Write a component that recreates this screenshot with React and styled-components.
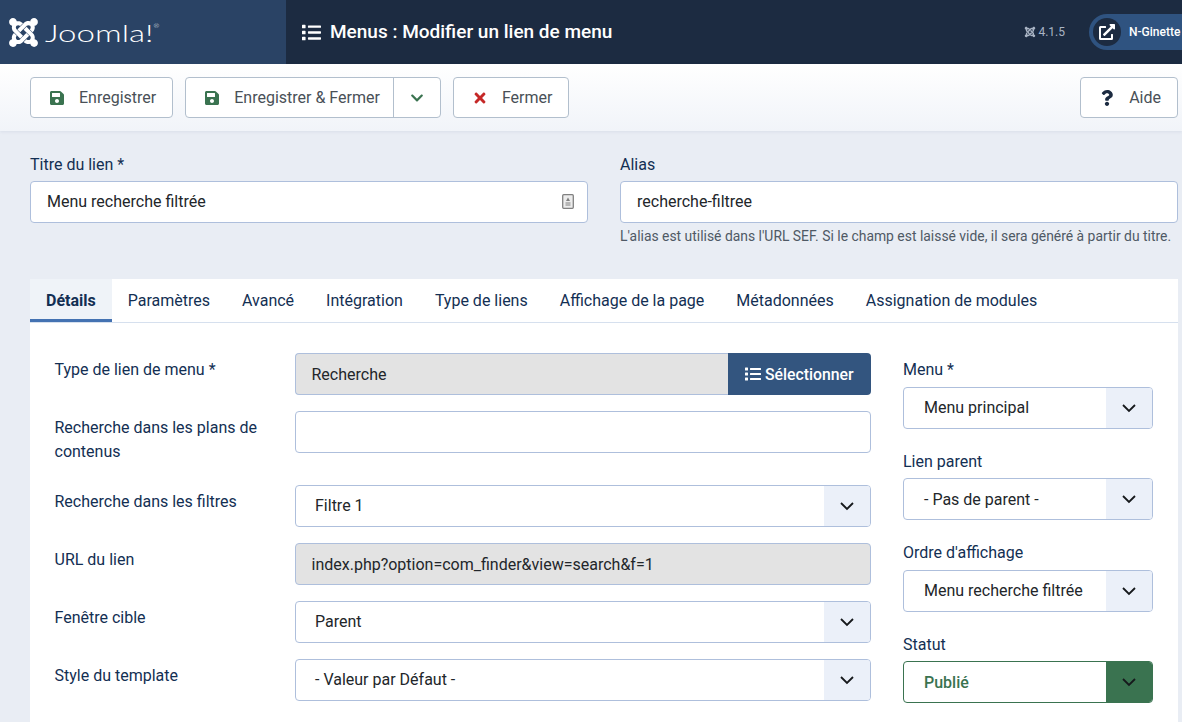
import React from 'react';
import styled, { createGlobalStyle } from 'styled-components';
import { FaJoomla, FaSave, FaTimes, FaChevronDown, FaQuestion, FaList, FaExternalLinkAlt } from 'react-icons/fa';

const Global = createGlobalStyle`
html, body {
  margin: 0;
  height: 722px;
  overflow: hidden;
  background: #e9edf4;
  font-family: Roboto, "Liberation Sans", sans-serif;
}
* { box-sizing: border-box; }`

const Header = styled.header`
display: flex;
height: 64px;
background: #1c2b41;
color: white;`

const Brand = styled.div`
display: flex;
align-items: center;
gap: 5px;
width: 286px;
padding-left: 7px;
background: #2a4365;
svg { font-size: 33px; flex: none; }`

const Wordmark = styled.span`
font-family: Lato, sans-serif;
font-weight: 300;
font-size: 24px;
transform: scaleX(1.38);
transform-origin: left center;
sup { font-size: 5px; vertical-align: 14px; }`

const PageTitle = styled.h1`
display: flex;
align-items: center;
gap: 9px;
flex: 1;
margin: 0 0 2px 16px;
font-size: 19px;
font-weight: 500;
svg { font-size: 19px; margin-top: 2px; }`

const Version = styled.span`
display: flex;
align-items: center;
gap: 2px;
margin-right: 24px;
font-size: 12px;
color: #a9b4c4;
svg { font-size: 12px; }`

const UserPill = styled.div`
display: flex;
align-items: center;
gap: 8px;
align-self: center;
width: 93px;
height: 36px;
padding-left: 4px;
border-radius: 18px 0 0 18px;
background: #2f5380;
font-size: 12px;
font-weight: 500;
white-space: nowrap;`

const PillIcon = styled.span`
display: flex;
align-items: center;
justify-content: center;
width: 28px;
height: 28px;
flex: none;
border-radius: 50%;
background: #1c2b41;
svg { font-size: 16px; }`

const Toolbar = styled.div`
display: flex;
align-items: center;
gap: 12px;
height: 67px;
padding: 0 4px 0 30px;
background: linear-gradient(#ffffff, #f1f4f9);
box-shadow: 0 1px 3px rgba(40, 70, 110, 0.08);`

const ToolGroup = styled.div`
display: flex;
height: 41px;
margin-left: ${p => (p.$end ? 'auto' : '0')};
border: 1px solid #b2bfcd;
border-radius: 4px;
background: white;`

const ToolButton = styled.div`
display: flex;
align-items: center;
gap: 14px;
padding: 0 ${p => (p.$split ? '13px' : '16px')} 0 18px;
font-size: 16px;
color: #495057;
svg { font-size: 16px; color: ${p => p.$icon}; }`

const ToolCaret = styled.div`
display: flex;
align-items: center;
justify-content: center;
width: 47px;
border-left: 1px solid #b2bfcd;
svg { font-size: 14px; color: #3a7350; }`

const TitleRow = styled.div`
display: grid;
grid-template-columns: 558px 558px;
gap: 32px;
padding: 22px 4px 0 30px;`

const Label = styled.label`
display: block;
font-size: 16px;
line-height: 24px;
color: #132f53;`

const TitleInput = styled.div`
display: flex;
align-items: center;
justify-content: space-between;
height: 42px;
margin-top: 4px;
padding: 0 13px 2px 16px;
border: 1px solid #aebfdc;
border-radius: 4px;
background: white;
font-size: 16px;
color: #22262a;`

const Help = styled.div`
margin-top: 3px;
font-size: 13.9px;
line-height: 21px;
color: #4f5965;
white-space: nowrap;`

const Panel = styled.section`
margin: 32px 4px 0 30px;
height: 443px;
background: white;`

const Tabs = styled.nav`
display: flex;
height: 44px;
border-bottom: 1px solid #d6e0ee;`

const Tab = styled.div`
display: flex;
align-items: center;
padding: 0 16px;
height: 43px;
font-size: 16px;
font-weight: ${p => (p.$active ? 700 : 400)};
color: #132f53;
background: ${p => (p.$active ? '#eff3f8' : 'transparent')};
border-bottom: ${p => (p.$active ? '3px solid #4472b2' : '0')};
padding-top: ${p => (p.$active ? '3px' : '0')};`

const Body = styled.div`
display: grid;
grid-template-columns: 816.5px 250px;
column-gap: 32px;
padding: 30px 0 0 24.5px;`

const Row = styled.div`
display: grid;
grid-template-columns: 240.5px 576px;
margin-bottom: 16px;`

const RowLabel = styled(Label)`
padding: 5px 16px 5px 0;`

const Field = styled.div`
display: flex;
align-items: center;
height: 42px;
padding-left: 15.5px;
border: 1px solid #aebfdc;
border-radius: 4px;
background: ${p => (p.$disabled ? '#e3e3e3' : 'white')};
font-size: 16px;
color: #22262a;`

const PickerWrap = styled.div`
display: flex;
height: 42px;`

const PickerValue = styled(Field)`
flex: 1;
border-radius: 4px 0 0 4px;
border-right: 0;`

const PickerButton = styled.div`
display: flex;
align-items: center;
gap: 4px;
width: 143px;
padding-left: 17px;
border-radius: 0 4px 4px 0;
background: #33557f;
color: white;
font-size: 15.8px;
font-weight: 500;
svg { font-size: 16px; }`

const SelectBox = styled.div`
display: flex;
align-items: stretch;
height: 42px;
border: 1px solid ${p => (p.$ok ? '#3a7350' : '#aebfdc')};
border-radius: 4px;
overflow: hidden;
background: white;
font-size: 16px;
color: ${p => (p.$ok ? '#3a7350' : '#22262a')};
font-weight: ${p => (p.$ok ? 500 : 400)};`

const SelectText = styled.div`
display: flex;
align-items: center;
flex: 1;
padding: 0 0 ${p => (p.$wide ? '0' : '1px')} ${p => (p.$wide ? '20px' : '19px')};
white-space: nowrap;`

const SelectCaret = styled.div`
display: flex;
align-items: center;
justify-content: center;
width: 46px;
background: ${p => (p.$ok ? '#3a7350' : '#ebf0f9')};`

const Side = styled.aside`
padding-top: 5.2px;`

const SideGroup = styled.div`
margin-bottom: 20.9px;
${Label} { margin-bottom: 4.6px; }`

const Caret = () => (
  <svg width="16" height="16" viewBox="0 0 16 16" fill="none" stroke="#16191c" strokeWidth="1.8">
    <path d="M2 5l6 6 6-6" />
  </svg>
)

const Select = ({ value, ok, wide }) => (
  <SelectBox $ok={ok}>
    <SelectText $wide={wide}>{value}</SelectText>
    <SelectCaret $ok={ok}><Caret /></SelectCaret>
  </SelectBox>
)

const CounterIcon = () => (
  <svg width="12" height="15" viewBox="0 0 12 15" fill="none">
    <rect x="0.7" y="0.7" width="10.6" height="13.6" rx="1" stroke="#808080" strokeWidth="1.3" fill="#ececec" />
    <path d="M6 3.5L8 7H4z" fill="#808080" />
    <path d="M3.5 9h5M3.5 11h5" stroke="#808080" strokeWidth="1" />
  </svg>
)

const tabs = ['Paramètres', 'Avancé', 'Intégration', 'Type de liens', 'Affichage de la page', 'Métadonnées', 'Assignation de modules']

export default function App() {
  return (
    <>
      <Global />
      <Header>
        <Brand>
          <FaJoomla />
          <Wordmark>Joomla!<sup>®</sup></Wordmark>
        </Brand>
        <PageTitle><FaList />Menus : Modifier un lien de menu</PageTitle>
        <Version><FaJoomla />4.1.5</Version>
        <UserPill>
          <PillIcon><FaExternalLinkAlt /></PillIcon>
          N-Ginette
        </UserPill>
      </Header>
      <Toolbar>
        <ToolGroup><ToolButton $icon="#3a7350"><FaSave />Enregistrer</ToolButton></ToolGroup>
        <ToolGroup>
          <ToolButton $split $icon="#3a7350"><FaSave />Enregistrer &amp; Fermer</ToolButton>
          <ToolCaret><FaChevronDown /></ToolCaret>
        </ToolGroup>
        <ToolGroup><ToolButton $icon="#c52827"><FaTimes />Fermer</ToolButton></ToolGroup>
        <ToolGroup $end><ToolButton $icon="#1c2b41"><FaQuestion />Aide</ToolButton></ToolGroup>
      </Toolbar>
      <TitleRow>
        <div>
          <Label>Titre du lien *</Label>
          <TitleInput>Menu recherche filtrée<CounterIcon /></TitleInput>
        </div>
        <div>
          <Label>Alias</Label>
          <TitleInput>recherche-filtree</TitleInput>
          <Help>L'alias est utilisé dans l'URL SEF. Si le champ est laissé vide, il sera généré à partir du titre.</Help>
        </div>
      </TitleRow>
      <Panel>
        <Tabs>
          <Tab $active>Détails</Tab>
          {tabs.map(t => <Tab key={t}>{t}</Tab>)}
        </Tabs>
        <Body>
          <div>
            <Row>
              <RowLabel>Type de lien de menu *</RowLabel>
              <PickerWrap>
                <PickerValue $disabled>Recherche</PickerValue>
                <PickerButton><FaList />Sélectionner</PickerButton>
              </PickerWrap>
            </Row>
            <Row>
              <RowLabel>Recherche dans les plans de contenus</RowLabel>
              <Field />
            </Row>
            <Row>
              <RowLabel>Recherche dans les filtres</RowLabel>
              <Select value="Filtre 1" />
            </Row>
            <Row>
              <RowLabel>URL du lien</RowLabel>
              <Field $disabled>index.php?option=com_finder&amp;view=search&amp;f=1</Field>
            </Row>
            <Row>
              <RowLabel>Fenêtre cible</RowLabel>
              <Select value="Parent" />
            </Row>
            <Row>
              <RowLabel>Style du template</RowLabel>
              <Select value="- Valeur par Défaut -" />
            </Row>
          </div>
          <Side>
            <SideGroup><Label>Menu *</Label><Select wide value="Menu principal" /></SideGroup>
            <SideGroup><Label>Lien parent</Label><Select wide value="- Pas de parent -" /></SideGroup>
            <SideGroup><Label>Ordre d'affichage</Label><Select wide value="Menu recherche filtrée" /></SideGroup>
            <SideGroup><Label>Statut</Label><Select wide ok value="Publié" /></SideGroup>
          </Side>
        </Body>
      </Panel>
    </>
  );
}
